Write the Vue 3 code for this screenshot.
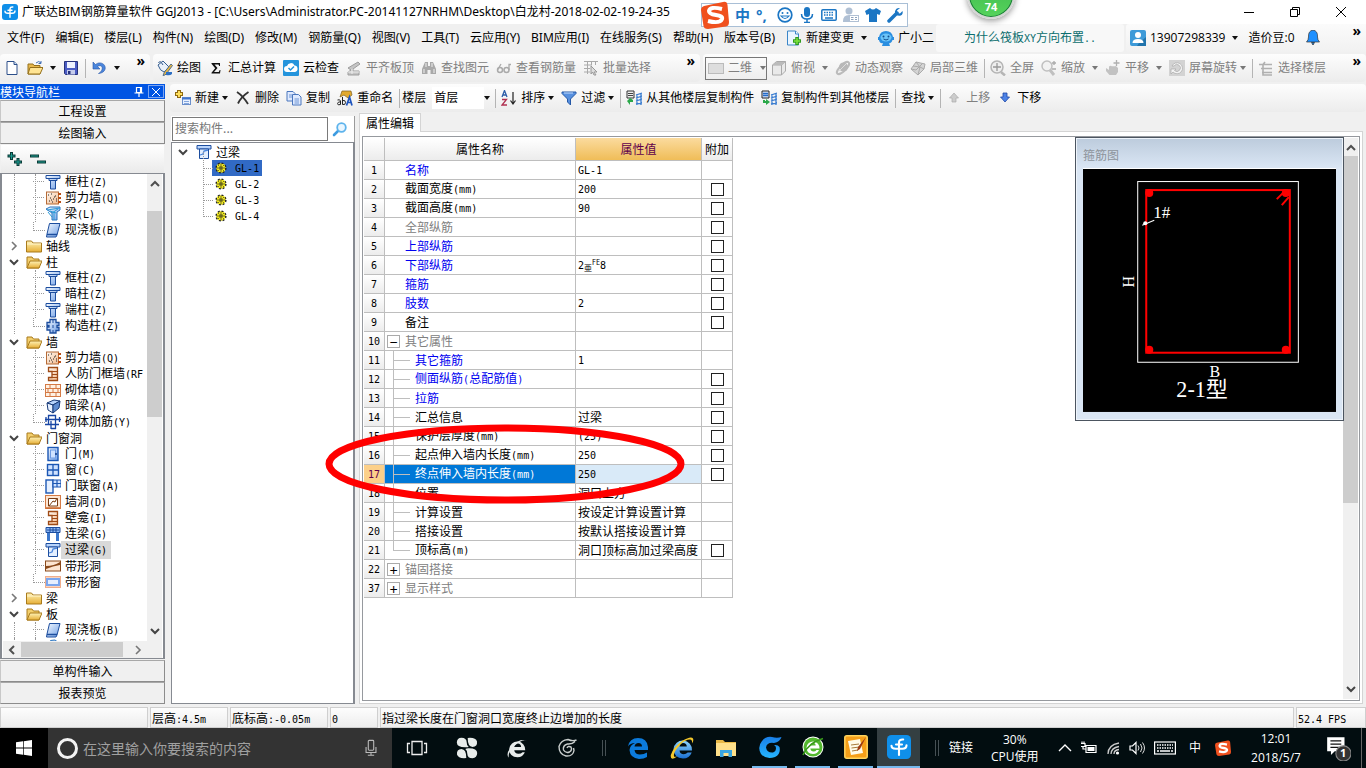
<script setup>
import { h, ref } from 'vue'

const Ic = (p) => h('svg', { class: 'ic', width: p.s || 16, height: p.s || 16, 'aria-hidden': 'true' }, [h('use', { href: '#' + p.n })])
Ic.props = ['n', 's']

const Tx = (p) =>
  h('span', { class: 'tx' }, (p.t.match(/[\x20-\x7e]+|[^\x20-\x7e]+/g) || []).map((s) => h('span', { class: /[\x20-\x7e]/.test(s) ? 'half' : 'full' }, s)))
Tx.props = ['t']

const menus = ['文件(F)', '编辑(E)', '楼层(L)', '构件(N)', '绘图(D)', '修改(M)', '钢筋量(Q)', '视图(V)', '工具(T)', '云应用(Y)', 'BIM应用(I)', '在线服务(S)', '帮助(H)', '版本号(B)']

const drawTools = [
  { i: 'paint', t: '绘图' }, { i: 'sigma', t: '汇总计算' }, { i: 'cloud', t: '云检查' },
  { i: 'align', t: '平齐板顶', off: 1 }, { i: 'binoc', t: '查找图元', off: 1 },
  { i: 'glasses', t: '查看钢筋量', off: 1 }, { i: 'batch', t: '批量选择', off: 1 }
]
const viewTools = [
  { i: 'cube', t: '俯视', a: 1 }, { i: 'orbit', t: '动态观察' }, { i: 'part3d', t: '局部三维' }, { sep: 1 },
  { i: 'full', t: '全屏' }, { i: 'zoomg', t: '缩放', a: 1 }, { i: 'pan', t: '平移', a: 1 }, { i: 'rot', t: '屏幕旋转', a: 2 }, { sep: 1 },
  { i: 'floors', t: '选择楼层' }
]
const editTools = [
  { i: 'add', t: '新建', a: 2 }, { i: 'del', t: '删除' }, { i: 'copy', t: '复制' }, { i: 'rename', t: '重命名' }
]
const listTools = [
  { sep: 1 }, { i: 'sort', t: '排序', a: 2 }, { i: 'filter', t: '过滤', a: 2 }, { sep: 1 },
  { i: 'from', t: '从其他楼层复制构件' }, { i: 'to', t: '复制构件到其他楼层' }, { sep: 1 },
  { t: '查找', a: 2 }, { sep: 1 }, { i: 'up', t: '上移', off: 1 }, { i: 'down', t: '下移' }
]

const leaf = (i, t, x = {}) => ({ l: 1, i, t, ...x })
const nav = [
  leaf('col', '框柱(Z)'), leaf('wall', '剪力墙(Q)'), leaf('beam', '梁(L)'), leaf('slab', '现浇板(B)', { last: 1 }),
  { t: '轴线', i: 'folder' },
  { t: '柱', i: 'folderOpen', open: 1 },
  leaf('col', '框柱(Z)'), leaf('col', '暗柱(Z)'), leaf('col', '端柱(Z)'), leaf('gz', '构造柱(Z)', { last: 1 }),
  { t: '墙', i: 'folderOpen', open: 1 },
  leaf('wall', '剪力墙(Q)'), leaf('rf', '人防门框墙(RF'), leaf('brick', '砌体墙(Q)'), leaf('hbeam', '暗梁(A)'), leaf('rebar', '砌体加筋(Y)', { last: 1 }),
  { t: '门窗洞', i: 'folderOpen', open: 1 },
  leaf('door', '门(M)'), leaf('win', '窗(C)'), leaf('dwin', '门联窗(A)'), leaf('hole', '墙洞(D)'), leaf('rf', '壁龛(I)'),
  leaf('lbeam', '连梁(G)'), leaf('lintel', '过梁(G)', { sel: 1 }), leaf('strip', '带形洞'), leaf('stripw', '带形窗', { last: 1 }),
  { t: '梁', i: 'folder' },
  { t: '板', i: 'folderOpen', open: 1 },
  leaf('slab', '现浇板(B)'), leaf('hslab', '螺旋板(B)')
]

const items = ['GL-1', 'GL-2', 'GL-3', 'GL-4']

const rows = [
  { n: 1, t: '名称', v: 'GL-1', c: 'b' }, { n: 2, t: '截面宽度(mm)', v: '200', k: 1 }, { n: 3, t: '截面高度(mm)', v: '90', k: 1 },
  { n: 4, t: '全部纵筋', v: '', c: 'g', k: 1 }, { n: 5, t: '上部纵筋', v: '', c: 'b', k: 1 }, { n: 6, t: '下部纵筋', v: '', bar: 1, c: 'b', k: 1 },
  { n: 7, t: '箍筋', v: '', c: 'b', k: 1 }, { n: 8, t: '肢数', v: '2', c: 'b', k: 1 }, { n: 9, t: '备注', v: '', k: 1 },
  { n: 10, t: '其它属性', v: '', c: 'g', x: '−' },
  { n: 11, t: '其它箍筋', v: '1', c: 'b', s: 1 }, { n: 12, t: '侧面纵筋(总配筋值)', v: '', c: 'b', s: 1, k: 1 },
  { n: 13, t: '拉筋', v: '', c: 'b', s: 1, k: 1 }, { n: 14, t: '汇总信息', v: '过梁', s: 1, k: 1 },
  { n: 15, t: '保护层厚度(mm)', v: '(25)', s: 1, k: 1 }, { n: 16, t: '起点伸入墙内长度(mm)', v: '250', s: 1, k: 1 },
  { n: 17, t: '终点伸入墙内长度(mm)', v: '250', s: 1, k: 1, sel: 1 }, { n: 18, t: '位置', v: '洞口上方', s: 1 },
  { n: 19, t: '计算设置', v: '按设定计算设置计算', s: 1 }, { n: 20, t: '搭接设置', v: '按默认搭接设置计算', s: 1 },
  { n: 21, t: '顶标高(m)', v: '洞口顶标高加过梁高度', s: 1, k: 1, end: 1 },
  { n: 22, t: '锚固搭接', v: '', c: 'g', x: '+' }, { n: 37, t: '显示样式', v: '', c: 'g', x: '+' }
]
const query = ref('')
const ask = ref('')
</script>

<template>
  <div class="app">
    <svg class="defs" width="0" height="0" aria-hidden="true">
      <defs>
        <linearGradient id="gb" x1="0" y1="0" x2="1" y2="1"><stop offset="0" stop-color="#f4f9ff" /><stop offset="1" stop-color="#6f9fe6" /></linearGradient>
        <linearGradient id="gy" x1="0" y1="0" x2="0" y2="1"><stop offset="0" stop-color="#fff3b8" /><stop offset="1" stop-color="#e6ae35" /></linearGradient>
        <linearGradient id="go" x1="0" y1="0" x2="1" y2="1"><stop offset="0" stop-color="#fffaf4" /><stop offset="1" stop-color="#f2b98c" /></linearGradient>
        <linearGradient id="gie" x1="0" y1="0" x2="0" y2="1"><stop offset="0" stop-color="#8fd6ff" /><stop offset="1" stop-color="#1a6fd0" /></linearGradient>
        <linearGradient id="gg" x1="0" y1="0" x2="0" y2="1"><stop offset="0" stop-color="#1a7fe8" /><stop offset="1" stop-color="#25b5ff" /></linearGradient>
      </defs>
      <symbol id="logo" viewBox="0 0 16 16"><rect width="16" height="16" rx="3" fill="#0f8fe9" /><path d="M8 13.300V5q0-2.200 2.800-2M3 7.200q0 2 2.800 2h4.400q2.800 0 2.800-2.300M6 6.300h4" fill="none" stroke="#fff" stroke-width="1.400" stroke-linecap="round" /></symbol>
      <symbol id="newdoc" viewBox="0 0 16 16"><path d="M3 1.500h7l3 3v10H3z" fill="#fff" stroke="#2c4f8a" /><path d="M10 1.500v3h3" fill="#cfe0f7" stroke="#2c4f8a" /></symbol>
      <symbol id="open" viewBox="0 0 16 16"><path d="M1 4h5l1 1.500h6V14H1z" fill="#e8b84c" stroke="#94701c" /><path d="M3 7.500h13L13 14H1z" fill="#ffe493" stroke="#94701c" /><path d="M9 3q3-3 5 0m0-2v2.500h-2.500" fill="none" stroke="#3e6db5" /></symbol>
      <symbol id="save" viewBox="0 0 16 16"><path d="M1.500 1.500h13v13h-12l-1-1z" fill="#4b5cc4" stroke="#27327c" /><path d="M4 2h8v6H4z" fill="#eef2ff" /><path d="M4 10h8v4.500H4z" fill="#c6cdec" /><path d="M5 11h2.500v3H5z" fill="#27327c" /></symbol>
      <symbol id="undo" viewBox="0 0 16 16"><path d="M2 2v7h7L6.500 6.500c3-2 5.500 0 4.500 3-.5 2-2 3-3.500 4 5-.5 7.500-3.500 6.500-7C13 3 8 1.500 4.500 4.500z" fill="#4b86dc" stroke="#2656a8" stroke-width=".6" /></symbol>
      <symbol id="paint" viewBox="0 0 16 16"><path d="M1 5l5-4 6 6-5 5q-4-1-6-7z" fill="#e9f1fb" stroke="#355d8f" /><path d="M1.500 3Q3-.5 6 5" fill="none" stroke="#355d8f" /><path d="M14 4l1.500 1.500L10 13l-2 2-2 .5L7.500 12z" fill="#e8b63f" stroke="#54708e" /><path d="M9 12h6v2q-2 2-6 1z" fill="#2d6fc4" /></symbol>
      <symbol id="sigma" viewBox="0 0 16 16"><path d="M3.500 3h8.500v3h-.8L10.500 4.500H6.500L9.500 8l-3.500 4h4.800L11.700 10h.8L12 13.500H3.500v-.8L7.200 8.300 3.500 3.800z" fill="#111" /></symbol>
      <symbol id="cloud" viewBox="0 0 16 16"><rect width="16" height="16" rx="1" fill="#2494dc" /><path d="M4 12a3 3 0 0 1 0-6 4 4 0 0 1 7.500-.5A3.300 3.300 0 0 1 12 12z" fill="#fff" /><path d="M5.500 8l2 2L11 6.500" fill="none" stroke="#2494dc" stroke-width="1.500" /></symbol>
      <symbol id="align" viewBox="0 0 16 16"><path d="M2 8l10-6 2 2-7 5v2h6v4H2v-3l3-2z" fill="#c4c4c4" stroke="#9d9d9d" /><path d="M2 12h11M6 9v5" stroke="#eee" /></symbol>
      <symbol id="binoc" viewBox="0 0 16 16"><path d="M4 2h3v4h2V2h3l3 7v5H9.500v-4h-3v4H1V9z" fill="#a9a9a9" /><path d="M5 3v4M11 3v4M3 9v4M13 9v4" stroke="#f0f0f0" /></symbol>
      <symbol id="glasses" viewBox="0 0 16 16"><circle cx="4" cy="10" r="2.500" fill="none" stroke="#aaa" stroke-width="1.500" /><circle cx="10.500" cy="10" r="2.500" fill="none" stroke="#aaa" stroke-width="1.500" /><path d="M1.500 10L5 4M13 10V4.500h2" fill="none" stroke="#aaa" stroke-width="1.300" /></symbol>
      <symbol id="batch" viewBox="0 0 16 16"><path d="M1 1.500h14M4.500 1v13M1 5h8M1 8.500h6M1 12h6M8.500 1v4M12.500 1v4" stroke="#aaa" /><path d="M8 6l6 6h-3l2 3h-2l-1.500-3L8 14z" fill="#ddd" stroke="#999" /></symbol>
      <symbol id="rect2d" viewBox="0 0 16 16"><rect x=".5" y="3.500" width="15" height="10" fill="#ddd" stroke="#bbb" /></symbol>
      <symbol id="cube" viewBox="0 0 16 16"><path d="M1.500 5l4-3.500h9V11l-4 4h-9z" fill="#e9e9e9" stroke="#aaa" /><path d="M1.500 5h9v10M10.500 5l4-3.500" fill="none" stroke="#aaa" /><path d="M5.500 2h9l-4 3h-9z" fill="#bbb" /></symbol>
      <symbol id="orbit" viewBox="0 0 16 16"><ellipse cx="8" cy="8" rx="8" ry="3" transform="rotate(-45 8 8)" fill="none" stroke="#bbb" stroke-width="2" /><circle cx="8.500" cy="7" r="4.500" fill="#b8b8b8" /><path d="M4 11l8-8" stroke="#ddd" /></symbol>
      <symbol id="part3d" viewBox="0 0 16 16"><path d="M1 9l5-7 9 2-1 5-6 6z" fill="#d5d5d5" stroke="#aaa" /><path d="M6 2l4 5 4 2M3 6l7 1-2 8M1 9l5 1 6-6" fill="none" stroke="#aaa" /></symbol>
      <symbol id="full" viewBox="0 0 16 16"><circle cx="7" cy="7" r="6" fill="#eee" stroke="#b5b5b5" stroke-width="1.500" /><path d="M7 3v8M3 7h8" stroke="#999" stroke-width="1.300" /><path d="M11 12l4 3.500" stroke="#b5b5b5" stroke-width="2.500" /></symbol>
      <symbol id="zoomg" viewBox="0 0 16 16"><circle cx="6" cy="6" r="5" fill="#f2f2f2" stroke="#c0c0c0" stroke-width="1.500" /><path d="M9 10l4 5" stroke="#c0c0c0" stroke-width="3" /><path d="M13 1v4M11 3h4M11 9h4" stroke="#aaa" stroke-width="1.300" /></symbol>
      <symbol id="pan" viewBox="0 0 16 16"><path d="M1 8l3 2V6.500q2-1.500 3 0 1-1 2 0 1-1 2.500 0L13 8v4l-2 3H4.500L1 11z" fill="#c2c2c2" /><path d="M11.500 0v6M8.500 3h6" stroke="#b0b0b0" stroke-width="1.300" /></symbol>
      <symbol id="rot" viewBox="0 0 16 16"><rect width="16" height="16" fill="#d3d3d3" /><path d="M3 6a5.500 5.500 0 1 1 1 6l-2 2v-5h5l-1.500 1.500A3.500 3.500 0 1 0 5 6z" fill="#f5f5f5" stroke="#aaa" stroke-width=".7" /></symbol>
      <symbol id="floors" viewBox="0 0 16 16"><path d="M1 4.500h4l2-2.500M5 4.500h9M3 8.500h11M4 12.500h10M5 4v11h9" fill="none" stroke="#b0b0b0" stroke-width="1.600" /></symbol>
      <symbol id="add" viewBox="0 0 16 16"><path d="M4 0v8M0 4h8" stroke="#8f6a12" stroke-width="4" /><path d="M4 1v6M1 4h6" stroke="#ffdf5d" stroke-width="2" /><rect x="7.500" y="7.500" width="8" height="7" fill="#e9f1ff" stroke="#6b8fcb" /><path d="M7 8.500h9" stroke="#3f74d0" stroke-width="2" /><path d="M9 11.500h5M9 13.500h5" stroke="#85a7dd" /></symbol>
      <symbol id="del" viewBox="0 0 16 16"><path d="M2 2q6 4 11 12M13.500 2Q6 7 3 13.500" fill="none" stroke="#333" stroke-width="1.800" /></symbol>
      <symbol id="copy" viewBox="0 0 16 16"><path d="M1 1.500h6l2 2V11H1z" fill="#dfeaff" stroke="#4a76bd" /><path d="M6.500 4.500h6l2.500 2.500v8H6.500z" fill="#dfeaff" stroke="#4a76bd" /><path d="M3 5h3M3 7h3M8.500 9h4.500M8.500 11h4.500M8.500 13h4.500" stroke="#6e95d3" /></symbol>
      <symbol id="rename" viewBox="0 0 16 16"><path d="M5 1h9l1 4-4 3-4-3-4 2z" fill="#e1a92e" stroke="#7b5d1e" stroke-width=".7" /><path d="M9.500 15.500l3-8.500 2.500 8.500M10.500 12.500h4" fill="none" stroke="#1f55be" stroke-width="1.700" /><path d="M.5 10q2.500-1 3 1v3.500q-3 1-3-.8t3-2M5.500 7v7.500q3 .8 3-2t-3-2" fill="none" stroke="#222" /></symbol>
      <symbol id="sort" viewBox="0 0 16 16"><path d="M1 7l2.500-6.500L6 7M2 5h3" fill="none" stroke="#2c5da8" stroke-width="1.300" /><path d="M1 9.500h4.500L1 15h5" fill="none" stroke="#b03050" stroke-width="1.300" /><path d="M12 2v11M9.500 10.500L12 14l2.500-3.500" fill="none" stroke="#222" stroke-width="1.200" /></symbol>
      <symbol id="filter" viewBox="0 0 16 16"><path d="M1 2h14v1.500L9.500 9v6L6.500 12V9L1 3.500z" fill="#5790df" stroke="#2458a6" /><path d="M3 3h9" stroke="#c4dcff" /></symbol>
      <symbol id="from" viewBox="0 0 16 16"><path d="M1 1h7v7H1z" fill="#eee" stroke="#333" /><path d="M2 3.500h5M2 5.500h5" stroke="#444" /><path d="M10 5l6-2M10 8l6-2M10 11l6-2M10 14l6-1M11 4v11M15 3v12" stroke="#3b7dd0" stroke-width="1.300" /><path d="M7 10v2H4v3l-3-4 3-3" fill="#2ba84a" /></symbol>
      <symbol id="to" viewBox="0 0 16 16"><path d="M1 1h7v7H1z" fill="#dce8ff" stroke="#222" /><path d="M2 3.500h5M2 5.500h5" stroke="#246bc6" stroke-width="1.500" /><path d="M10 5l6-2M10 8l6-2M10 11l6-2M10 14l6-1M11 4v11M15 3v12" stroke="#3b7dd0" stroke-width="1.300" /><path d="M2 10v3h3v2l4-3-4-3v2H4v-1z" fill="#2ba84a" /></symbol>
      <symbol id="up" viewBox="0 0 16 16"><path d="M8 3l4.500 5H10v4H6V8H3.500z" fill="#ccc" stroke="#aaa" stroke-width=".7" /></symbol>
      <symbol id="down" viewBox="0 0 16 16"><path d="M8 12L3.500 7H6V3h4v4h2.500z" fill="#4d83e6" stroke="#1e48a6" stroke-width=".8" /></symbol>
      <symbol id="change" viewBox="0 0 16 16"><path d="M1.500 1h8l3 3v11h-11z" fill="#eaf5ff" stroke="#3b86c8" /><path d="M9.500 1v3h3" fill="#fff" stroke="#3b86c8" /><path d="M11 7v8M7 11h8" stroke="#2f9a1e" stroke-width="3.500" /><path d="M11 8v6M8 11h6" stroke="#7ee33f" stroke-width="1.500" /></symbol>
      <symbol id="robot" viewBox="0 0 16 16"><path d="M8 1q6 0 7 6h1v3h-1.500q-1 4-3.500 3l1 3H4l1-3q-3 1-4-3H0V7h1q1-6 7-6z" fill="#2a8ee0" /><ellipse cx="8" cy="7.500" rx="5.500" ry="4" fill="#6cc4f8" /><circle cx="5.500" cy="6.500" r="1" fill="#124f8e" /><circle cx="10.500" cy="6.500" r="1" fill="#124f8e" /><path d="M5.500 9q2.500 2 5 0" fill="none" stroke="#124f8e" /></symbol>
      <symbol id="user" viewBox="0 0 16 16"><rect width="16" height="16" rx="2" fill="#3d9ad8" /><path d="M9 13l7-6v9h-9z" fill="#2174ac" /><circle cx="8" cy="5" r="3" fill="#fff" /><path d="M2.500 13q0-4 5.500-4t5.500 4z" fill="#fff" /></symbol>
      <symbol id="bell" viewBox="0 0 16 16"><path d="M8 0q5 1 4.500 7 0 3 2 5H1.500q2-2 2-5Q3 1 8 0z" fill="#1e90ff" stroke="#333" stroke-width=".7" /><path d="M6.500 12.500h3L8 15z" fill="#1e90ff" stroke="#222" stroke-width=".7" /></symbol>
      <symbol id="folder" viewBox="0 0 16 16"><path d="M.5 3h5l1.500 2h8.500v9H.5z" fill="url(#gy)" stroke="#a97b1c" /><path d="M1 6h14" stroke="#fff5cc" /></symbol>
      <symbol id="folderOpen" viewBox="0 0 16 16"><path d="M1 3h5l1.500 2H13v9H1z" fill="#f3cf6d" stroke="#a97b1c" /><path d="M4 7h12l-3 7H1z" fill="url(#gy)" stroke="#a97b1c" /></symbol>
      <symbol id="col" viewBox="0 0 16 16"><path d="M1 1.500h14v3h-3v2H10.500V15h-5V6.500H4v-2H1z" fill="url(#gb)" stroke="#1c4d9e" /><path d="M4 4.500h8M5 6.500h6" stroke="#1c4d9e" /></symbol>
      <symbol id="wall" viewBox="0 0 16 16"><rect x="1.500" y="2" width="12" height="12" fill="url(#go)" stroke="#b56a36" /><path d="M3 5h1M6 4h1M10 6h1M5 8h1M8 9h1M4 11h1M11 11h1M7 12h1M9 7h1M6 10h1M11 9h1" stroke="#222" /><path d="M13 4h3M13 8h3M13 12h3" stroke="#b94f15" stroke-width="2" /></symbol>
      <symbol id="beam" viewBox="0 0 16 16"><path d="M1 3l4-2h10v3l-3 2v8H7V7z" fill="url(#gb)" stroke="#2b76c0" /><path d="M2 4l13-2M5 5l6 2M9 6v8M3 6l4 5M7 7l6-4" stroke="#2b9bd8" /></symbol>
      <symbol id="slab" viewBox="0 0 16 16"><path d="M4.500 1.500h10.500l-3 11.500-1 2H1.500l.5-3z" fill="url(#gb)" stroke="#1c4d9e" /><path d="M2 12.500h10" stroke="#1c4d9e" stroke-width="1.500" /></symbol>
      <symbol id="hslab" viewBox="0 0 16 16"><path d="M2 6q3-5 8-4l4 3v6H4z" fill="url(#gb)" stroke="#2b76c0" /></symbol>
      <symbol id="gz" viewBox="0 0 16 16"><path d="M5 1.500h6v3h3v3h-2v2h2v3h-3v2.500H5V12H2V9h2V7.500H2v-3h3z" fill="url(#gb)" stroke="#1c4d9e" stroke-width="1.300" /><path d="M8 2v3M8 7v3M8 12v3" stroke="#1c4d9e" /></symbol>
      <symbol id="rf" viewBox="0 0 16 16"><path d="M3.500 1.500h9v13h-9v-3H7v-6H3.500z" fill="url(#go)" stroke="#a04b16" stroke-width="1.300" /><path d="M7 5.500h5M7 8.500h5M7 11.500h5" stroke="#a04b16" /></symbol>
      <symbol id="brick" viewBox="0 0 16 16"><rect x=".5" y="2.500" width="15" height="12" fill="#fff1e3" stroke="#d47a45" /><path d="M1 6.500h14M1 10.500h14M5 2.500v4M11 2.500v4M8 6.500v4M3 6.500v4M13 6.500v4M5 10.500v4M11 10.500v4" stroke="#d47a45" /></symbol>
      <symbol id="hbeam" viewBox="0 0 16 16"><path d="M2 5l7-3 6 1-7 4z" fill="#b8d4fb" stroke="#183a78" /><path d="M2 5l6 2v8l-5-3z" fill="#e8f1ff" stroke="#183a78" /><path d="M8 7l7-4-1 7-6 5z" fill="#5f8cd0" stroke="#183a78" /></symbol>
      <symbol id="rebar" viewBox="0 0 16 16"><path d="M3.500 1.500h7v9h-7zM0 5.500h16M0 10.500h14M14.500 3v5M6 15v-8M10.500 10v5M6 14.500h5M1 3v5" fill="none" stroke="#1846a4" stroke-width="1.300" /></symbol>
      <symbol id="door" viewBox="0 0 16 16"><rect x="3" y="1.500" width="10" height="13" fill="url(#gb)" stroke="#1c57b4" stroke-width="1.400" /><rect x="5.500" y="4" width="5" height="8" fill="#cfe2ff" stroke="#6d9ae2" /><path d="M10 8h2" stroke="#103a86" stroke-width="1.500" /></symbol>
      <symbol id="win" viewBox="0 0 16 16"><rect x="2.500" y="2.500" width="11" height="11" fill="#cfe2ff" stroke="#1c57b4" stroke-width="1.400" /><path d="M8 2v12M2 8h12" stroke="#1c57b4" stroke-width="1.300" /></symbol>
      <symbol id="dwin" viewBox="0 0 16 16"><rect x="1" y="2" width="7" height="13" fill="#e6f0ff" stroke="#1c57b4" stroke-width="1.400" /><path d="M8 2h8v7H8zM12 2v7M8 5.500h8" fill="#cfe2ff" stroke="#1c57b4" stroke-width="1.200" /></symbol>
      <symbol id="hole" viewBox="0 0 16 16"><rect x=".5" y="1.500" width="15" height="13" fill="#fde6d2" stroke="#d47a45" /><path d="M3.500 12V4.500h9V12zM4 12l4-5 2 1 2-4" fill="#fff" stroke="#7a3c12" /><path d="M1 14h14" stroke="#c86a30" stroke-width="1.500" /></symbol>
      <symbol id="lbeam" viewBox="0 0 16 16"><path d="M1 1.500h14v5H1z" fill="#8db8f4" stroke="#1c4d9e" /><path d="M3.500 7v8M12.500 7v8" stroke="#3b77cc" stroke-width="3" /><path d="M2 4h12M5 2v4M8 2v4M11 2v4" stroke="#1c4d9e" /></symbol>
      <symbol id="lintel" viewBox="0 0 16 16"><path d="M1 1.500h14v3.500H1z" fill="#b8d4fb" stroke="#1c4d9e" /><path d="M3.500 5h9v9.500h-9z" fill="#e3efff" stroke="#1c4d9e" /><path d="M4 11l3-1 1-3 4-1" fill="none" stroke="#4b86dc" stroke-width="1.300" /></symbol>
      <symbol id="strip" viewBox="0 0 16 16"><rect x=".5" y="3" width="15" height="10" fill="#fde6d2" stroke="#8a4a1c" /><path d="M1 8q8 0 14-4v3Q8 8 1 11z" fill="#8a4a1c" /></symbol>
      <symbol id="stripw" viewBox="0 0 16 16"><rect x=".5" y="2.500" width="15" height="11" fill="#fbd3bc" stroke="#efad8c" /><rect x="1" y="4" width="14" height="8" fill="#7ba6ee" /><rect x="3" y="6" width="10" height="4" fill="#e6efff" /></symbol>
      <symbol id="gear" viewBox="0 0 12 12"><circle cx="6" cy="6" r="4.800" fill="#f6ee1b" stroke="#222" stroke-width="1.600" stroke-dasharray="1.900 1.870" /><circle cx="6" cy="6" r="4" fill="#f6ee1b" /><path d="M6 1.500v3M6 7.500v3M1.500 6h3M7.500 6h3M3 3l1.500 1.500M9 3L7.500 4.500M3 9l1.500-1.500M9 9L7.500 7.500" stroke="#333" stroke-width=".7" /><circle cx="6" cy="6" r="1.200" fill="#f6ee1b" stroke="#222" /></symbol>
      <symbol id="mag" viewBox="0 0 16 16"><path d="M7 9l-5 5" stroke="#3d9be0" stroke-width="2.600" stroke-linecap="round" /><circle cx="9.500" cy="6.500" r="4.300" fill="#e9f6ff" stroke="#5db3ec" stroke-width="1.800" /></symbol>
      <symbol id="sogou" viewBox="0 0 28 28"><path d="M3 5L22 1q4-1 4.500 3l1.500 17q0 4-3 4.500L7 28q-4 0-4.500-3L0 9q0-3 3-4z" fill="#f0501e" /><path d="M21 8q-12-3-13 2 0 3 7 4t6 4q-2 5-14 2" fill="none" stroke="#fff" stroke-width="4" /></symbol>
      <symbol id="smile" viewBox="0 0 16 16"><circle cx="8" cy="8" r="6.800" fill="none" stroke="#1b76c4" stroke-width="1.700" /><circle cx="5.500" cy="6" r="1" fill="#1b76c4" /><circle cx="10.500" cy="6" r="1" fill="#1b76c4" /><path d="M4 9q4 5 8 0z" fill="none" stroke="#1b76c4" stroke-width="1.200" /></symbol>
      <symbol id="mic" viewBox="0 0 16 16"><rect x="5" y="0" width="6" height="10" rx="3" fill="#1b76c4" /><path d="M2.500 7q0 5 5.500 5t5.500-5M8 12v4M5 15.500h6" fill="none" stroke="#1b76c4" stroke-width="1.500" /></symbol>
      <symbol id="kb" viewBox="0 0 16 16"><rect x=".8" y="2.800" width="14.400" height="10.400" rx="1" fill="none" stroke="#1b76c4" stroke-width="1.500" /><path d="M3 5.500h10M3 8h10" stroke="#1b76c4" stroke-width="1.500" stroke-dasharray="1.500 1" /><path d="M4 11h8" stroke="#1b76c4" stroke-width="1.500" /></symbol>
      <symbol id="man" viewBox="0 0 16 16"><circle cx="6" cy="4" r="3.500" fill="#b0c0d4" /><path d="M0 14q0-6 6-6h8v7H0z" fill="#b0c0d4" /><rect x="6.500" y="8.500" width="9" height="6" fill="#fff" stroke="#b0c0d4" /><path d="M8 10.500h2.500M8 12.500h2.500M12 10.500h2M12 12.500h2" stroke="#8fa3bd" /></symbol>
      <symbol id="shirt" viewBox="0 0 16 16"><path d="M5 1q3 3 6 0l5 3-1.500 4L12 7v8H4V7L1.500 8 0 4z" fill="#1b76c4" /></symbol>
      <symbol id="wrench" viewBox="0 0 16 16"><path d="M2 14l8-8" stroke="#1b76c4" stroke-width="3.500" stroke-linecap="round" /><path d="M13 1l-3 2.500.5 2.500 2.500.5L15.500 4q1 4-3 4.800-5 0-4.500-4.500Q9 .5 13 1z" fill="#1b76c4" /></symbol>
      <symbol id="windows" viewBox="0 0 16 16"><path d="M0 2.300L7 1.300v6.300H0zM7.700 1.200L16 0v7.600H7.700zM0 8.400h7v6.300L0 13.700zM7.700 8.400H16V16l-8.300-1.200z" fill="#fff" /></symbol>
      <symbol id="micw" viewBox="0 0 20 20"><rect x="7" y="1.500" width="6" height="11" rx="1" fill="none" stroke="#bbb" stroke-width="1.200" /><path d="M4.500 9v6h11V9M10 15v3M6.500 18h7" fill="none" stroke="#bbb" stroke-width="1.200" /></symbol>
      <symbol id="task" viewBox="0 0 22 22"><path d="M6 4.500h10v13H6zM4 6.500H1.500v9H4M18 6.500h2.500v9H18" fill="none" stroke="#eee" stroke-width="1.300" /></symbol>
      <symbol id="petals" viewBox="0 0 22 22"><path d="M9.800 10.300Q1 10.500.8 5.500 1 .8 5.500.8q5 0 5.200 4.500-.2 3 2 4.700-1.500.5-2.900.3zM11.700 1q8-.8 9.300 3.500.6 5.300-4.500 5.500-4.800-.2-4.800-9zM12.200 11.300q9-.2 9 4.700-.2 5-4.700 5.200-5 0-5.200-4.500.2-3-2-4.700 1.500-.6 2.900-.7zM10.300 21Q2.300 21.800 1 17.500.4 12.200 5.500 12q4.800.2 4.800 9z" fill="#e8eceb" /></symbol>
      <symbol id="ew" viewBox="0 0 24 24"><path d="M3.500 13a8.500 8.500 0 1 1 17.500 1.500H9q.5 3.800 4.500 3.800 3 0 4.500-1.800h2.500Q18.500 22 12.500 22q-8.500 0-9-9zM9 11h7.500q-.2-4-3.700-4T9 11z" fill="#e8eceb" /><path d="M3 22.500Q-1 18 7 9.500T23 4q-5-2-13 5T3 22.500z" fill="#e8eceb" /></symbol>
      <symbol id="gw" viewBox="0 0 22 22"><path d="M20.500 3q-4 1.500-8.500-.5-7 .5-9 7 0 8 7 9.500 7 .5 8-5.500l-.5-2.500M19 4.500q-3 3-7.500 2.500-5 1.500-4 6 2 3.500 6 2 3-2 1.500-5-3-1.500-4 1" fill="none" stroke="#c9cecd" stroke-width="1.400" /></symbol>
      <symbol id="edge" viewBox="0 0 22 22"><path d="M1 9.500Q2.500 1 11 1q9 0 10 9v3H7.500q.5 4.500 5.500 4.500 4 0 7-2V20q-3 2-8 2-9-1-9.500-9Q3 8 8 6q-5 0-7 3.500zM7.500 9.500H15Q15 6 11.500 6 8 6 7.500 9.500z" fill="#0c7bdc" /></symbol>
      <symbol id="ie" viewBox="0 0 24 24"><path d="M3.500 13a9 9 0 1 1 18.500 1.500H9.500q.5 3.800 4.200 3.800 2.500 0 4-1.800h4Q19.500 22.500 13 22.500q-9-.3-9.500-9.500zM9.500 10.500h7.300q-.2-3.500-3.600-3.500t-3.700 3.500z" fill="url(#gie)" /><path d="M7 20.500Q0 25.500.8 19 3 11.500 12 5q9-5.500 11-2.500 1 2-1 5 .5-4-2-4-5 0-10 5.500-7 7.500-6 11 .3 1.500 2.200.5z" fill="#f5c92d" /></symbol>
      <symbol id="explorer" viewBox="0 0 22 22"><path d="M1 3h7l2 2h11v14H1z" fill="#e9b947" /><path d="M1 6h20v13H1z" fill="#ffe08a" /><path d="M5 20v-7h12v7h-3.500v-4h-5v4z" fill="#3aa5e0" /></symbol>
      <symbol id="gblue" viewBox="0 0 24 24"><path d="M23.500 2Q22 7 16 8q-7-1-8 4.500 1 5.500 7 5 3-1 3-4.500 0-2-2-3 4-.5 5.500 2Q23 19 17 22 8 25 3 19-1 12 4 6 8 1 14 2q5 1.500 9.500 0z" fill="url(#gg)" /></symbol>
      <symbol id="egreen" viewBox="0 0 24 24"><circle cx="12" cy="12" r="10.500" fill="#fff" /><circle cx="12" cy="12" r="9.500" fill="#54b82f" /><path d="M5.500 12.500a6.500 6.500 0 1 1 13 1H9.300q.5 3 3.200 3 2 0 3-1.500H18q-1.500 4-6 4-6.500-.5-6.500-6.500zm3.800-2h5.400q-.3-2.800-2.700-2.800t-2.700 2.800z" fill="#fff" /><path d="M2 20Q7 8 22 3.500" fill="none" stroke="#3b9c1c" stroke-width="1.500" /></symbol>
      <symbol id="notes" viewBox="0 0 24 24"><rect x=".8" y=".8" width="22.400" height="22.400" rx="2" fill="#f59f19" stroke="#ffd45d" stroke-width="1.500" /><path d="M4 6l12-2 3 14-12 2z" fill="#fffbe9" /><path d="M7 10l8-1M7.500 13l8-1M8 16l6-1" stroke="#a87b3c" /><path d="M22 2l-8 10-1 4 3-2z" fill="#9c3a12" /></symbol>
      <symbol id="chev" viewBox="0 0 16 16"><path d="M2 11l6-6 6 6" fill="none" stroke="#fff" stroke-width="1.400" /></symbol>
      <symbol id="power" viewBox="0 0 16 16"><path d="M5 5.500h10v7H5zM15 8v2M0 3.500h4v3H0M2 6.500V9h3M1 1.500v2M3 1.500v2" fill="none" stroke="#fff" stroke-width="1.200" /><path d="M6.500 7h7v4h-7z" fill="#fff" /></symbol>
      <symbol id="wifi" viewBox="0 0 16 16"><path d="M3 14Q3 5 14 3M6 14q0-6 8-7.500M9 14q0-4 5-4.500" fill="none" stroke="#ccc" stroke-width="1.300" /><circle cx="12.500" cy="13" r="1.600" fill="#fff" /></symbol>
      <symbol id="vol" viewBox="0 0 16 16"><path d="M1 6h2.500L7 2.500v11L3.500 10H1z" fill="none" stroke="#fff" stroke-width="1.200" /><path d="M9 5.500q2 2.500 0 5M11.500 4q3 4 0 8M13.500 2.500q4 5.500 0 11" fill="none" stroke="#ddd" /></symbol>
      <symbol id="kbw" viewBox="0 0 22 22"><rect x=".6" y="5" width="20.800" height="12" fill="none" stroke="#fff" stroke-width="1.200" /><path d="M3 8h16M3 11h16" stroke="#fff" stroke-dasharray="1.500 1" stroke-width="1.300" /><path d="M3 14h2M6 14h10M17 14h2" stroke="#fff" stroke-width="1.300" /></symbol>
      <symbol id="note" viewBox="0 0 24 24"><path d="M2 2h16v13H9l-3.500 3.500V15H2z" fill="#fff" /><path d="M5 5.500h10M5 8.500h10M5 11.500h8" stroke="#111" stroke-width="1.200" /><circle cx="17" cy="17" r="7" fill="#333" stroke="#888" /></symbol>
      <symbol id="pin" viewBox="0 0 12 12"><path d="M3.500 1.500h5v5h-5zM7.500 1v6M1.500 7h9M6 7v4" fill="none" stroke="#fff" stroke-width="1.200" /></symbol>
      <symbol id="xw" viewBox="0 0 12 12"><path d="M2 2l8 8M10 2l-8 8" stroke="#fff" /></symbol>
      <symbol id="cdown" viewBox="0 0 12 12"><path d="M2 4l4 4 4-4" fill="none" stroke="#444" stroke-width="2" /></symbol>
      <symbol id="cup" viewBox="0 0 12 12"><path d="M2 8l4-4 4 4" fill="none" stroke="#505050" stroke-width="2" /></symbol>
      <symbol id="cright" viewBox="0 0 12 12"><path d="M4 2l4 4-4 4" fill="none" stroke="#777" stroke-width="1.600" /></symbol>
      <symbol id="cleft" viewBox="0 0 12 12"><path d="M8 2L4 6l4 4" fill="none" stroke="#505050" stroke-width="2" /></symbol>
      <symbol id="plus2" viewBox="0 0 16 16"><path d="M4.500 1v8M.5 5h8M11 7v8M7 11h8" stroke="#0a3a36" stroke-width="3" /><path d="M4.500 2v6M1.500 5h6M11 8v6M8 11h6" stroke="#1c9c90" /></symbol>
      <symbol id="minus2" viewBox="0 0 16 16"><path d="M0 5h9M7 11h9" stroke="#0a3a36" stroke-width="3" /><path d="M1 5h7M8 11h7" stroke="#1c9c90" /></symbol>
    </svg>

    <header class="title">
      <Ic n="logo" />
      <h1>广联达BIM钢筋算量软件 GGJ2013 - [C:\Users\Administrator.PC-20141127NRHM\Desktop\白龙村-2018-02-02-19-24-35</h1>
      <div class="winbtns">
        <button aria-label="最小化"><svg width="12" height="12"><path d="M1 6.500h10" stroke="#000" /></svg></button>
        <button aria-label="还原"><svg width="12" height="12"><path d="M1.500 3.500h7v7h-7zM3.500 3.500v-2h7v7h-2" fill="none" stroke="#000" /></svg></button>
        <button aria-label="关闭"><svg width="12" height="12"><path d="M1 1l10 10M11 1L1 11" stroke="#000" /></svg></button>
      </div>
      <div class="ime">
        <Ic n="sogou" :s="28" /><b>中</b><i>°,</i>
        <Ic v-for="n in ['smile', 'mic', 'kb', 'man', 'shirt', 'wrench']" :key="n" :n="n" />
      </div>
      <div class="ball">74</div>
    </header>

    <div class="menurow">
      <nav class="menubar">
        <button v-for="m in menus" :key="m">{{ m }}</button>
        <button class="ib chg"><Ic n="change" />新建变更<span class="arr w"></span></button>
        <button class="ib"><Ic n="robot" />广小二</button>
      </nav>
      <a class="tip" href="#"><Tx t="为什么筏板XY方向布置.." /></a>
      <div class="account">
        <button class="ib"><Ic n="user" />13907298339<span class="arr w"></span></button>
        <span>造价豆:0</span>
        <button aria-label="消息"><Ic n="bell" /></button>
        <span class="more">»</span>
      </div>
    </div>

    <div class="bars">
      <div class="strip std">
        <button aria-label="新建工程"><Ic n="newdoc" /></button>
        <button class="ib" aria-label="打开"><Ic n="open" /><span class="arr w"></span></button>
        <button aria-label="保存"><Ic n="save" /></button>
        <span class="sep"></span>
        <button class="ib" aria-label="撤销"><Ic n="undo" /><span class="arr w"></span></button>
        <span class="more">»</span>
      </div>
      <div class="strip draw">
        <button v-for="b in drawTools" :key="b.t" class="ib" :class="{ off: b.off }"><Ic :n="b.i" />{{ b.t }}</button>
        <span class="more">»</span>
      </div>
      <div class="strip view off">
        <label class="dim"><Ic n="rect2d" /><select aria-label="视图维度"><option>二维</option></select><span class="arr"></span></label>
        <template v-for="(b, k) in viewTools" :key="k">
          <span v-if="b.sep" class="sep"></span>
          <button v-else class="ib off"><Ic :n="b.i" />{{ b.t }}<span v-if="b.a" class="arr" :class="{ w: b.a === 1 }"></span></button>
        </template>
        <span class="more">»</span>
      </div>
    </div>

    <main class="body">
      <aside class="side">
        <div class="sidehead">模块导航栏<span class="grow"></span><button aria-label="固定"><Ic n="pin" :s="12" /></button><button class="cls" aria-label="关闭"><Ic n="xw" :s="12" /></button></div>
        <button class="big">工程设置</button>
        <button class="big">绘图输入</button>
        <div class="pm"><button aria-label="全部展开"><Ic n="plus2" /></button><button aria-label="全部折叠"><Ic n="minus2" /></button></div>
        <div class="navbox">
          <div class="navtop">
            <ul class="tree">
              <li v-for="(r, k) in nav" :key="k" :class="{ leaf: r.l, last: r.last, root: !r.l }">
                <button v-if="!r.l" class="tg" :aria-label="r.t"><Ic :n="r.open ? 'cdown' : 'cright'" :s="12" /></button>
                <Ic :n="r.i" />
                <span class="lb" :class="{ sel: r.sel }"><Tx :t="r.t" /></span>
              </li>
            </ul>
            <div class="vs"><Ic n="cup" :s="12" /><i class="thumb"></i><Ic n="cdown" :s="12" /></div>
          </div>
          <div class="hs"><Ic n="cleft" :s="12" /><i></i><Ic n="cright" :s="12" /></div>
        </div>
        <button class="big">单构件输入</button>
        <button class="big">报表预览</button>
      </aside>

      <section class="right">
        <div class="strip edit">
          <button v-for="b in editTools" :key="b.t" class="ib"><Ic :n="b.i" />{{ b.t }}<span v-if="b.a" class="arr"></span></button>
          <span class="sep"></span>
          <label class="floor">楼层<select><option>首层</option></select><span class="arr"></span></label>
          <template v-for="(b, k) in listTools" :key="k">
            <span v-if="b.sep" class="sep"></span>
            <button v-else class="ib" :class="{ off: b.off }"><Ic v-if="b.i" :n="b.i" />{{ b.t }}<span v-if="b.a" class="arr"></span></button>
          </template>
        </div>
        <div class="work">
          <section class="comps">
            <div class="find"><input v-model="query" aria-label="搜索构件" placeholder="搜索构件..." /><button aria-label="搜索"><Ic n="mag" /></button></div>
            <div class="clist">
              <div class="croot"><button class="tg" aria-label="过梁"><Ic n="cdown" :s="12" /></button><Ic n="lintel" /><span>过梁</span></div>
              <ul>
                <li v-for="(g, k) in items" :key="g"><span :class="{ on: k === 0 }"><Ic n="gear" :s="12" /><Tx :t="g" /></span></li>
              </ul>
            </div>
          </section>

          <section class="editor">
            <div class="tabs"><button class="tab">属性编辑</button></div>
            <div class="page">
              <div class="frame">
                <table>
                  <colgroup><col class="c0" /><col class="c1" /><col class="c2" /><col class="c3" /></colgroup>
                  <thead><tr><th></th><th>属性名称</th><th class="hot">属性值</th><th>附加</th></tr></thead>
                  <tbody>
                    <tr v-for="r in rows" :key="r.n" :class="{ cur: r.sel }">
                      <th><Tx :t="'' + r.n" /></th>
                      <td class="nm" :class="[r.c, { sub: r.s, end: r.end }]"><button v-if="r.x" class="ex" :aria-label="r.t">{{ r.x }}</button><Tx :t="r.t" /></td>
                      <td class="vl"><span v-if="r.bar" class="bar"><Tx t="2" /><small>亜</small><sup>FE</sup><Tx t="8" /></span><Tx v-else :t="r.v" /></td>
                      <td class="ck"><input v-if="r.k" type="checkbox" :aria-label="r.t + ' 附加'" /></td>
                    </tr>
                  </tbody>
                </table>
                <div class="vs page-vs"><Ic n="cup" :s="12" /><i class="thumb"></i><Ic n="cdown" :s="12" /></div>
                <figure class="stirrup">
                  <figcaption>箍筋图</figcaption>
                  <svg viewBox="0 0 252 242" width="252" height="242">
                    <rect width="252" height="242" fill="#000" />
                    <rect x="54.500" y="12.500" width="160" height="180" fill="none" stroke="#fff" />
                    <rect x="63" y="21" width="143" height="162" fill="none" stroke="#f00" stroke-width="2" />
                    <g fill="#f00"><circle cx="66" cy="24" r="4" /><circle cx="202" cy="24" r="4" /><circle cx="66" cy="180" r="4" /><circle cx="202" cy="180" r="4" /></g>
                    <path d="M193 30l8-8M198 36l7-8" stroke="#f00" stroke-width="2" />
                    <path d="M59 56l12-5" stroke="#fff" /><circle cx="62" cy="54" r="2" fill="#fff" />
                    <g fill="#fff" class="cad"><text x="70" y="49" font-size="17">1#</text><text x="126" y="207" font-size="16">B</text><text x="93" y="227" font-size="22">2-1型</text><text font-size="16" transform="translate(51 118) rotate(-90)">H</text></g>
                  </svg>
                </figure>
              </div>
            </div>
          </section>
          <svg class="mark" width="360" height="80" aria-hidden="true"><ellipse cx="180" cy="40" rx="176" ry="36" fill="none" stroke="#f00" stroke-width="7" /></svg>
        </div>
      </section>
    </main>

    <footer class="status">
      <span class="s0"></span><span class="s1"><Tx t="层高:4.5m" /></span><span class="s2"><Tx t="底标高:-0.05m" /></span><span class="s3"><Tx t="0" /></span>
      <span class="s4">指过梁长度在门窗洞口宽度终止边增加的长度</span><span class="s5"><Tx t="52.4 FPS" /></span>
    </footer>

    <div class="taskbar">
      <button class="start" aria-label="开始"><Ic n="windows" /></button>
      <label class="ask"><i class="ring"></i><input v-model="ask" aria-label="搜索" placeholder="在这里输入你要搜索的内容" /><Ic n="micw" :s="18" /></label>
      <button v-for="n in ['task', 'petals', 'ew', 'gw']" :key="n" class="tb q" :aria-label="n"><Ic :n="n" :s="22" /></button>
      <span class="grip"></span>
      <button v-for="n in ['edge', 'ie', 'explorer']" :key="n" class="tb" :aria-label="n"><Ic :n="n" :s="n === 'ie' ? 24 : 22" /></button>
      <button v-for="n in ['gblue', 'egreen', 'notes']" :key="n" class="tb run" :aria-label="n"><Ic :n="n" :s="24" /></button>
      <button class="tb run act" aria-label="GGJ2013"><Ic n="logo" :s="24" /></button>
      <span class="grip"></span>
      <span class="link">链接</span>
      <div class="cpu">30%<br />CPU使用</div>
      <div class="tray">
        <button v-for="n in ['chev', 'power', 'wifi', 'vol']" :key="n" :aria-label="n"><Ic :n="n" /></button>
        <button class="wide" aria-label="键盘"><Ic n="kbw" :s="22" /></button>
        <button class="mid">中</button>
        <button class="mid" aria-label="搜狗"><Ic n="sogou" /></button>
        <div class="clock">12:01<br />2018/5/7</div>
        <button class="ntf" aria-label="通知"><Ic n="note" :s="26" /><b>1</b></button>
        <span class="desk"></span>
      </div>
    </div>
  </div>
</template>

<style>
body { overflow: hidden; }
.ic { display: block; flex: none; }
.half { font-family: "DejaVu Sans Mono", "Liberation Mono", monospace; font-size: 10px; }
.tx { white-space: pre; }
</style>

<style scoped>
* { box-sizing: border-box; }
.app { display: flex; flex-direction: column; height: 100vh; background: #f0f0f0; color: #000; font: 12px/16px "Open Sans", "Noto Sans CJK SC", sans-serif; overflow: hidden; }
.defs { position: absolute; }
button { font: inherit; color: inherit; background: none; border: 0; padding: 0; margin: 0; white-space: nowrap; }
input, select { font: inherit; color: inherit; }
ul { list-style: none; margin: 0; padding: 0; }
.grow { flex: 1; }
.title { position: relative; flex: none; display: flex; align-items: center; height: 24px; background: #fff; padding-left: 2px; gap: 4px; }
.title h1 { margin: 0; font: 400 12px/20px "Noto Sans", "Noto Sans CJK SC", sans-serif; white-space: nowrap; overflow: hidden; flex: 0 0 682px; }
.winbtns { margin-left: auto; display: flex; height: 20px; padding-right: 2px; }
.winbtns button { width: 46px; display: grid; place-items: center; }
.ime { position: absolute; left: 701px; top: 3px; z-index: 3; width: 207px; height: 24px; display: flex; align-items: center; gap: 6px; background: #fff; border: 1px solid #a9bfd6; color: #1b76c4; padding-right: 3px; }
.ime > :first-child { margin-left: -1px; }
.ime b { font-size: 15px; line-height: 20px; }
.ime i { font-size: 15px; font-style: normal; font-weight: 700; width: 15px; }
.ball { position: absolute; left: 967px; top: -29px; z-index: 3; width: 48px; height: 48px; border-radius: 50%; border: 2px solid #d5d5d5; background: linear-gradient(#3ab54a, #56d35c); box-shadow: inset 0 0 0 1px #1c7a3a, 0 2px 6px #0006; color: #fff; font-size: 11px; font-weight: 700; text-align: center; padding-top: 26px; }
.menurow { flex: none; display: flex; height: 28px; gap: 2px; }
.menubar { display: flex; align-items: center; gap: 11px; padding-left: 7px; padding-right: 4px; flex: 0 0 934px; overflow: hidden; font-family: "Noto Sans", "Noto Sans CJK SC", sans-serif; }
.chg { margin-left: auto; }
.ib { display: flex; align-items: center; gap: 4px; }
.tip { flex: 1 1 186px; display: flex; align-items: center; justify-content: center; color: #0b6e6e; text-decoration: none; background: #f8f8f8; border-radius: 3px; }
.account { flex: 0 0 240px; display: flex; align-items: center; gap: 10px; padding-left: 4px; background: linear-gradient(#fbfbfb, #f1f1f1); border-radius: 3px 0 0 3px; }
.arr { flex: none; width: 0; height: 0; border: 3px solid transparent; border-top: 4px solid #111; border-bottom: 0; margin-left: -1px; }
.arr.w { margin: 0 0 0 3px; }
.off .arr { border-top-color: #777; }
.more { margin-left: auto; align-self: flex-start; font-size: 14px; line-height: 14px; font-weight: 700; padding-right: 5px; }
.bars { flex: none; display: flex; gap: 3px; height: 32px; padding: 2px 0; }
.strip { display: flex; align-items: center; gap: 7px; height: 28px; background: linear-gradient(#fdfdfd, #ececec); border-radius: 4px; }
.off { color: #808080; }
.std { flex: 0 0 150px; padding-left: 4px; }
.draw { flex: 0 0 547px; padding-left: 4px; }
.view { flex: 1; padding-left: 2px; gap: 7px; }
.view .more { color: #000; }
.sep { width: 1px; height: 19px; background: #b4b4b4; margin: 0 -2px 0 -1px; flex: none; }
select { appearance: none; border: 0; background: transparent; padding: 0; outline: 0; }
.dim { display: flex; align-items: center; gap: 4px; width: 62px; height: 23px; border: 1px solid #777; padding-left: 2px; margin-right: -3px; }
.dim select { width: 29px; }
.edit { flex: none; padding-left: 5px; }
.floor { display: flex; align-items: center; height: 25px; margin-right: -1px; margin-left: -3px; }
.floor select { width: 52px; height: 22px; margin-left: 6px; padding-left: 2px; background: #fff; }
.floor .arr { margin: 0; }
.body { flex: 1; min-height: 0; display: flex; gap: 4px; padding-bottom: 3px; font-family: "Noto Sans CJK SC", sans-serif; }
.side { flex: 0 0 166px; display: flex; flex-direction: column; padding-right: 1px; }
.sidehead { flex: none; display: flex; align-items: center; height: 15px; background: #0054e3; color: #fff; gap: 3px; padding-right: 1px; margin-bottom: 1px; }
.cls { border: 1px solid #7ba4f0; width: 16px; height: 13px; display: grid; place-items: center; }
.big { flex: none; height: 22px; background: #f0f0f0; border: 1px solid #8c8c8c; border-top-color: #a8a8a8; border-left-color: #c8c8c8; line-height: 20px; }
.pm { flex: none; display: flex; gap: 7px; align-items: center; height: 28px; padding-left: 6px; background: linear-gradient(#fff, #eaeaea); margin: 1px 1px 0; }
.navbox { flex: 1; min-height: 0; display: flex; flex-direction: column; border: 2px solid #868a91; border-width: 1px 2px; background: #fff; margin-bottom: 1px; padding: 0 1px; }
.navtop { flex: 1; min-height: 0; display: flex; }
.tree { flex: 1; min-width: 0; overflow: hidden; position: relative; }
.tree li { display: flex; align-items: center; height: 16px; position: relative; white-space: nowrap; }
.tree .root { padding-left: 5px; }
.tree .root .tg { margin-right: 6px; }
.tree .leaf { padding-left: 42px; }
.leaf::before { content: ""; position: absolute; left: 11px; top: 0; width: 20px; height: 16px; border: 1px dotted #999; border-width: 0 1px; }
.leaf.last::before { height: 16px; border-right: 0; }
.leaf.last::after { content: ""; position: absolute; left: 30px; top: 0; width: 11px; height: 8px; border: 1px dotted #999; border-width: 0 0 1px 1px; }
.leaf:not(.last)::after { content: ""; position: absolute; left: 30px; top: 7px; width: 11px; border-top: 1px dotted #999; }
.lb { padding: 0 4px; line-height: 16px; }
.lb.sel { background: #d9d9d9; }
.vs { flex: 0 0 15px; display: flex; flex-direction: column; align-items: center; justify-content: space-between; background: #f0f0f0; padding: 4px 0; }
.thumb { width: 100%; background: #cdcdcd; flex: 0 0 206px; margin: 21px 0 auto; }
.hs { flex: 0 0 17px; display: flex; align-items: center; background: #f0f0f0; padding: 0 18px 0 3px; gap: 3px; justify-content: space-between; }
.hs i { flex: 1; height: 15px; background: #cdcdcd; margin-right: 6px; }
.right { flex: 1; min-width: 0; display: flex; flex-direction: column; }
.edit { font-family: "Open Sans", "Noto Sans CJK SC", sans-serif; }
.work { flex: 1; min-height: 0; display: flex; gap: 4px; position: relative; padding-top: 1px; }
.comps { flex: 0 0 185px; display: flex; flex-direction: column; padding-left: 1px; padding-top: 3px; }
.find { display: flex; align-items: center; background: #fff; height: 26px; gap: 4px; padding: 0 1px; flex: none; border-right: 1px solid #9a9a9a; }
.find input { flex: 1; min-width: 0; height: 24px; border: 1px solid #7a7a7a; background: #fff; padding: 0 2px 3px; outline: 0; }
.find input::placeholder { color: #777; opacity: 1; }
.find button { padding-right: 5px; }
.clist { flex: 1; background: #fff; border: 1px solid #868a91; border-right-width: 2px; padding: 0 0 0 5px; }
.croot { display: flex; align-items: center; height: 17px; }
.croot .ic:nth-child(2) { margin: 0 4px 0 7px; }
.clist li { position: relative; height: 16px; padding-left: 35px; }
.clist li::before { content: ""; position: absolute; left: 26px; top: -8px; width: 9px; height: 16px; border: 1px dotted #999; border-width: 0 0 1px 1px; }
.clist li > span { display: inline-flex; align-items: center; gap: 8px; height: 16px; padding: 0 3px; }
.clist li > .on { background: #316ac5; }
.editor { flex: 1; min-width: 0; display: flex; flex-direction: column; padding-right: 3px; }
.tabs { flex: none; display: flex; height: 19px; margin-bottom: -1px; z-index: 1; }
.tab { background: #fff; border: 1px solid #d4d4d4; border-bottom: 0; padding: 0 6px; line-height: 16px; }
.page { flex: 1; min-height: 0; display: flex; background: #fff; border: 1px solid #d4d4d4; padding: 4px 2px 2px; }
.frame { flex: 1; min-width: 0; position: relative; display: flex; justify-content: space-between; align-items: flex-start; border: 1px solid #96999e; padding: 1px; }
table { border-collapse: separate; border-spacing: 0; table-layout: fixed; width: 369px; }
.c0 { width: 21px; } .c1 { width: 191px; } .c2 { width: 126px; } .c3 { width: 31px; }
th, td { padding: 0; height: 19px; border: 1px solid #bebebe; border-width: 0 1px 1px 0; font-weight: 400; line-height: 16px; white-space: nowrap; }
th { background: linear-gradient(#fff, #ececec); text-align: center; }
thead th { height: 23px; }
thead .hot { background: linear-gradient(#fbdb9e, #f0bd58); color: #60004c; }
.nm { position: relative; padding-left: 20px; }
.nm.b { color: #0000f0; }
.nm.g { color: #808080; }
.nm.sub { padding-left: 30px; }
.nm.sub::before { content: ""; position: absolute; left: 8px; top: 0; bottom: -1px; border-left: 1px solid #bebebe; }
.nm.sub::after { content: ""; position: absolute; left: 8px; top: 9px; width: 17px; border-top: 1px solid #bebebe; }
.nm.end::before { bottom: 9px; }
.ex { position: absolute; left: 2px; top: 3px; width: 13px; height: 13px; border: 1px solid #aaa; background: #fff; color: #000; font-size: 14px; line-height: 10px; text-align: center; }
.vl { padding-left: 2px; overflow: hidden; }
.bar { display: flex; align-items: center; height: 18px; }
.bar small { font-size: 8px; line-height: 10px; padding-top: 5px; }
.bar sup { font-size: 7px; line-height: 8px; align-self: flex-start; padding-top: 2px; }
.ck { text-align: center; line-height: 0; }
.ck input { appearance: none; width: 13px; height: 13px; margin: 0; border: 1px solid #222; background: #fff; vertical-align: middle; }
.cur th { background: #fcd08a; color: #60004c; }
.cur .nm { background: #0078d7; color: #fff; }
.cur .vl { background: #d9eaf8; }
.page-vs { align-self: stretch; flex-basis: 15px; background: #f0f0f0; }
.page-vs .thumb { flex: 0 1 347px; margin-top: 2px; }
.stirrup { position: absolute; right: 15px; top: 0; margin: 0; width: 269px; padding: 1px 7px 8px; border: 1px solid #4c5560; background: linear-gradient(#bccbdc, #dae6f4 30px); box-shadow: inset 0 0 0 1px #eef4fb; }
.stirrup figcaption { color: #8d949c; height: 29px; line-height: 32px; }
.stirrup svg { display: block; width: 100%; height: auto; border-top: 1px solid #fff; }
.cad { font-family: "Liberation Serif", "Noto Sans CJK SC", serif; }
.mark { position: absolute; left: 155px; top: 312px; z-index: 2; pointer-events: none; }
.status { flex: none; display: flex; gap: 2px; height: 21px; font-family: "Noto Sans CJK SC", sans-serif; }
.status > span { border: 1px solid #cfcfcf; background: linear-gradient(#fdfdfd, #ededed); padding-left: 1px; line-height: 19px; white-space: nowrap; }
.s0 { flex: 0 0 148px; } .s1 { flex: 0 0 78px; } .s2 { flex: 0 0 98px; } .s3 { flex: 0 0 48px; } .s4 { flex: 1; } .s5 { flex: 0 0 70px; }
.taskbar { flex: none; display: flex; height: 40px; background: #020d10; color: #fff; }
.start { width: 48px; background: #000; display: grid; place-items: center; }
.ask { width: 344px; background: #333; display: flex; align-items: center; gap: 5px; padding: 0 12px 0 9px; }
.ring { width: 21px; height: 21px; border: 3px solid #f2f2f2; border-radius: 50%; flex: none; }
.ask input { flex: 1; min-width: 0; background: none; border: 0; outline: 0; padding: 0; font-size: 14px; line-height: 20px; font-family: "Noto Sans CJK SC", sans-serif; }
.ask input::placeholder { color: #a0a0a0; opacity: 1; }
.tb { width: 44px; flex: none; display: grid; place-items: center; }
.q { width: 50px; }
.run { width: 43px; border-bottom: 2px solid #76b9ed; background-clip: padding-box; }
.run:not(.act) { width: 35px; margin: 0 4px; }
.act { background: #343f42; }
.grip { flex: none; width: 4px; height: 16px; border: 1px solid #465054; border-width: 0 1px; margin: 12px 10px; }
.act + .grip { margin-left: 15px; }
.link { align-self: center; margin-right: 18px; }
.cpu, .clock { text-align: center; line-height: 17px; padding-top: 3px; white-space: nowrap; }
.tray { margin-left: auto; display: flex; align-items: stretch; }
.tray button { width: 24px; display: grid; place-items: center; }
.tray .wide { width: 32px; }
.tray .mid { width: 28px; }
.clock { width: 78px; padding-top: 1px; line-height: 19px; }
.tray .ntf { width: 46px; position: relative; }
.ntf b { position: absolute; left: 25px; top: 17px; font-size: 11px; line-height: 16px; }
.desk { width: 5px; border-left: 1px solid #666; }
</style>
